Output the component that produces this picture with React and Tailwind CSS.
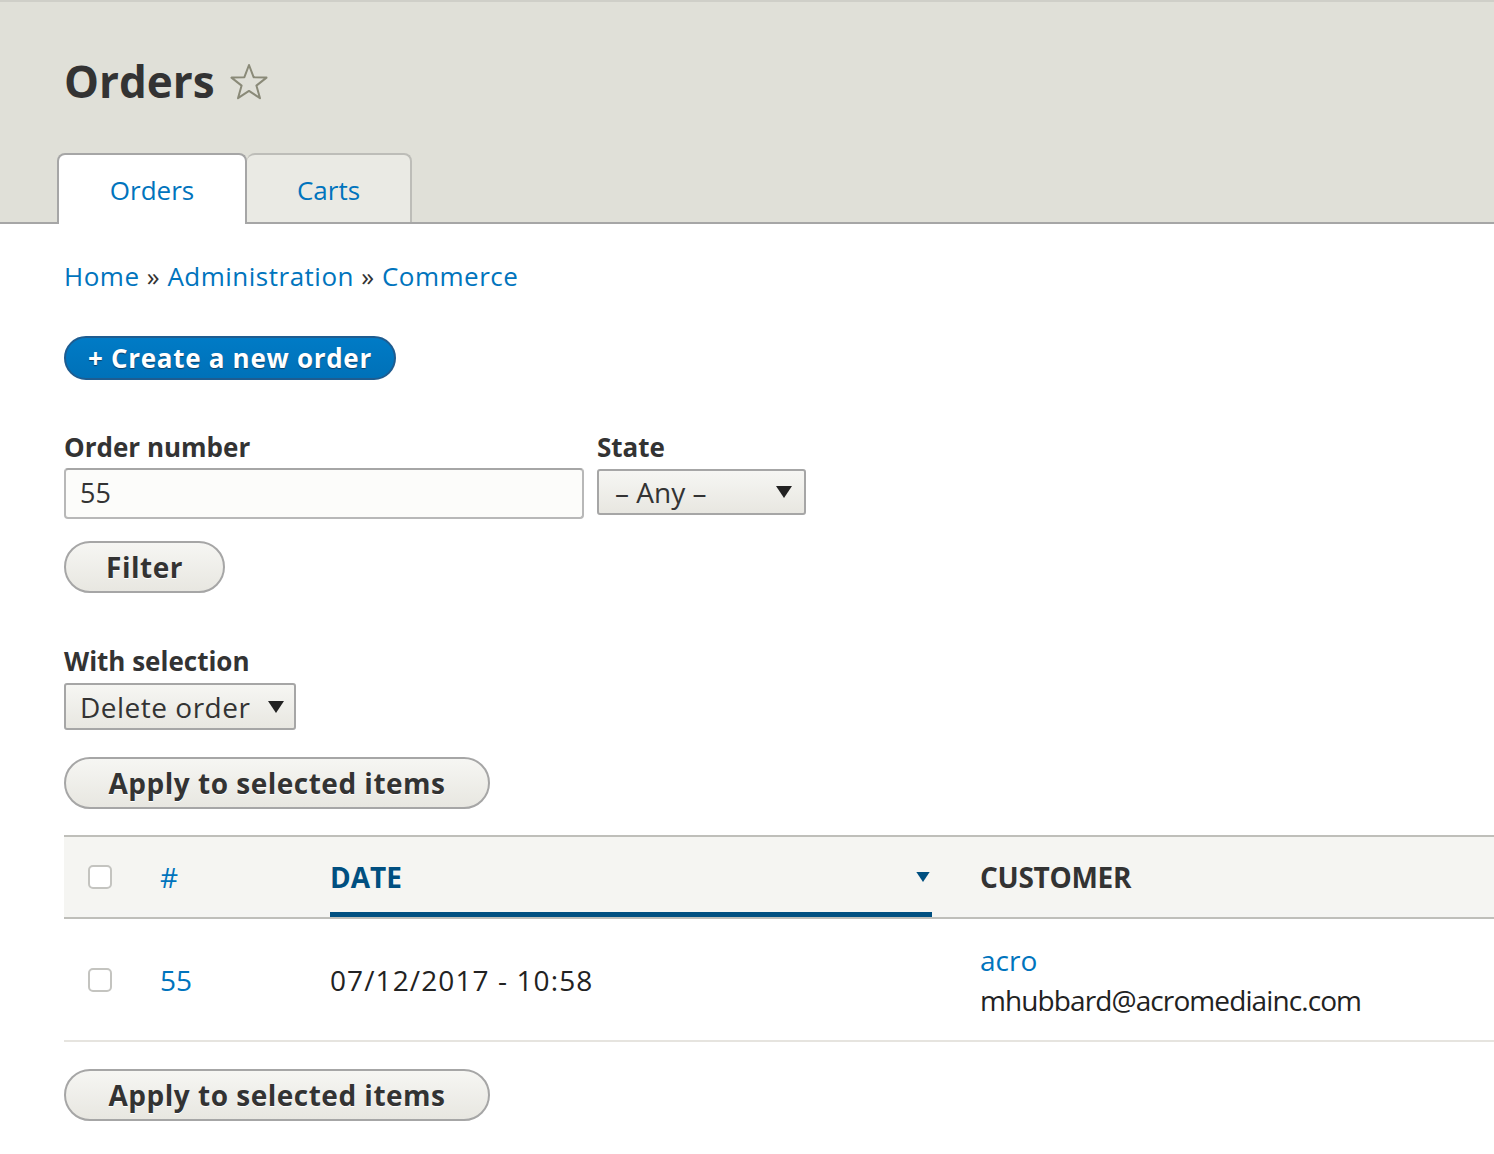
import React from "react";

const FONT = { fontFamily: '"Open Sans", "DejaVu Sans", sans-serif' };

function Star() {
  return (
    <svg width="38" height="38" viewBox="0 0 38 38" className="ml-[15px] mt-[2px]">
      <polygon
        points="19,2 23.6,14.2 36.5,14.6 26.4,22.6 30,35.2 19,27.9 8,35.2 11.6,22.6 1.5,14.6 14.4,14.2"
        fill="none"
        stroke="#8a8a78"
        strokeWidth="2"
        strokeLinejoin="round"
      />
    </svg>
  );
}

function Arrow({ color = "#222", w = 16, h = 12 }) {
  return (
    <svg width={w} height={h} viewBox="0 0 16 12">
      <polygon points="0,0 16,0 8,12" fill={color} />
    </svg>
  );
}

function Checkbox() {
  return (
    <span className="block w-[24px] h-[24px] rounded-[5px] border-2 border-[#c4c4c0] bg-white" />
  );
}

function GrayButton({ children, className = "" }) {
  return (
    <button
      className={
        "h-[52px] rounded-full border-2 border-[#a6a6a6] bg-gradient-to-b from-[#f6f6f3] to-[#e8e7e1] text-[#333] font-bold text-[28px] tracking-[0.5px] [text-shadow:0_1px_0_#fff] " +
        className
      }
    >
      {children}
    </button>
  );
}

export default function App() {
  return (
    <div className="min-h-screen bg-white text-[#222]" style={FONT}>
      {/* header */}
      <div className="bg-[#e0e0d8] border-t-2 border-[#cfcfc8] border-b-2 border-b-[#a6a6a6]">
        <div className="pl-[64px] pt-[57px] flex items-center">
          <h1 className="text-[44px] font-bold text-[#333] leading-none">Orders</h1>
          <Star />
        </div>
        <div className="pl-[57px] mt-[50px] flex -mb-[2px]">
          <div className="w-[190px] h-[71px] bg-white border-2 border-b-0 border-[#a6a6a6] rounded-t-[8px] flex items-center justify-center text-[#0074bd] text-[26px] pt-[2px]">
            Orders
          </div>
          <div className="w-[165px] h-[69px] bg-[#eaeae4] border-2 border-b-0 border-l-0 border-[#bdbdb8] rounded-t-[8px] flex items-center justify-center text-[#0074bd] text-[26px] pt-[3px]">
            Carts
          </div>
        </div>
      </div>

      <div className="pl-[64px]">
        {/* breadcrumb */}
        <div className="mt-[32px] text-[26px] text-[#0074bd] leading-[40px] tracking-[0.5px]">
          Home <span className="text-[#333]">»</span> Administration{" "}
          <span className="text-[#333]">»</span> Commerce
        </div>

        {/* create */}
        <div className="mt-[40px]">
          <button className="h-[44px] px-[22px] rounded-full bg-gradient-to-b from-[#007bc6] to-[#0071b8] border-2 border-[#1e5c90] text-white font-bold text-[26px] tracking-[0.7px] [text-shadow:0_1px_1px_#0f3d63] leading-none">
            + Create a new order
          </button>
        </div>

        {/* filters */}
        <div className="mt-[51px] flex gap-[13px]">
          <div>
            <div className="text-[26px] font-bold text-[#333] leading-[32px]">Order number</div>
            <div className="mt-[5px] w-[520px] h-[51px] border-2 border-[#b8b8b8] border-t-[#a6a6a6] rounded-[4px] bg-[#fcfcfa] flex items-center pl-[14px] text-[27px] text-[#333]">
              55
            </div>
          </div>
          <div>
            <div className="text-[26px] font-bold text-[#333] leading-[32px]">State</div>
            <div className="mt-[6px] w-[209px] h-[46px] border-2 border-[#a6a6a6] rounded-[3px] bg-gradient-to-b from-[#f6f6f3] to-[#e8e7e1] flex items-center justify-between pl-[16px] pr-[12px] text-[28px] text-[#333]">
              <span>– Any –</span>
              <Arrow />
            </div>
          </div>
        </div>

        <div className="mt-[22px]">
          <GrayButton className="w-[161px]">Filter</GrayButton>
        </div>

        {/* bulk */}
        <div className="mt-[52px] text-[26px] font-bold text-[#333] leading-[32px]">With selection</div>
        <div className="mt-[6px] w-[232px] h-[47px] border-2 border-[#a6a6a6] rounded-[3px] bg-gradient-to-b from-[#f6f6f3] to-[#e8e7e1] flex items-center justify-between pl-[14px] pr-[10px] text-[28px] text-[#333] tracking-[0.5px]">
          <span>Delete order</span>
          <Arrow />
        </div>
        <div className="mt-[27px]">
          <GrayButton className="w-[426px]">Apply to selected items</GrayButton>
        </div>

        {/* table */}
        <div className="mt-[26px] border-t-2 border-[#bfbfba]">
          <div className="h-[82px] bg-[#f5f5f2] border-b-2 border-[#bfbfba] flex items-stretch">
            <div className="w-[96px] pl-[24px] flex items-center">
              <Checkbox />
            </div>
            <div className="w-[170px] flex items-center text-[#0074bd] text-[28px]">#</div>
            <div className="w-[602px] relative flex items-center justify-between pr-[2px] text-[#004f80] text-[28px] font-bold">
              <span>DATE</span>
              <Arrow color="#004f80" w={14} h={10} />
              <span className="absolute left-0 right-0 bottom-0 h-[5px] bg-[#004f80]" />
            </div>
            <div className="pl-[48px] flex items-center text-[#333] text-[28px] font-bold tracking-[-0.3px]">CUSTOMER</div>
          </div>
          <div className="h-[123px] border-b-2 border-[#e6e4df] flex items-center">
            <div className="w-[96px] pl-[24px] flex items-center">
              <Checkbox />
            </div>
            <div className="w-[170px] text-[#0074bd] text-[28px]">55</div>
            <div className="w-[650px] text-[28px] text-[#222] tracking-[1.1px]">07/12/2017 - 10:58</div>
            <div className="text-[28px] leading-[40px]">
              <div className="text-[#0074bd]">acro</div>
              <div className="text-[#222] tracking-[-0.9px]">mhubbard@acromediainc.com</div>
            </div>
          </div>
        </div>

        <div className="mt-[27px]">
          <GrayButton className="w-[426px]">Apply to selected items</GrayButton>
        </div>
      </div>
    </div>
  );
}
